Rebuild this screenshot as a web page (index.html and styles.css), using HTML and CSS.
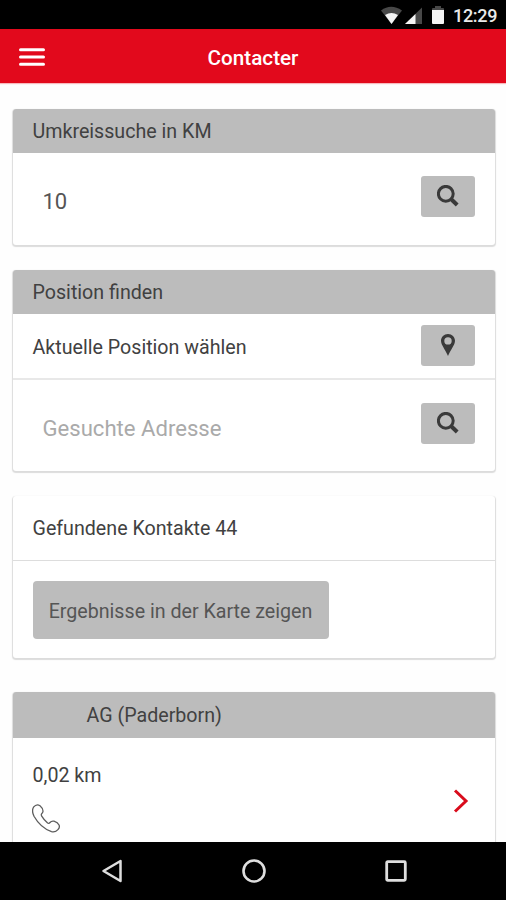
FILE: index.html
```html
<!DOCTYPE html>
<html lang="de">
<head>
<meta charset="utf-8">
<title>Contacter</title>
<link rel="stylesheet" href="styles.css">
</head>
<body>
<div class="status">
  <svg width="42" height="20" viewBox="0 0 42 20">
    <path d="M0 4.500Q10 -3 21 4.500L10.500 18Z" fill="#484848"/>
    <path d="M4 9Q10.500 5 17 9L10.500 18Z" fill="#f4f4f4"/>
    <path d="M41 1.500V18H24Z" fill="#484848"/>
    <path d="M34.500 8V18H24Z" fill="#f4f4f4"/>
  </svg>
  <svg class="battery" width="12" height="20" viewBox="0 0 12 20">
    <path d="M0 4V3Q0 2 1 2H3V0H9V2H11Q12 2 12 3V4Z" fill="#484848"/>
    <path d="M0 4H12V17Q12 18 11 18H1Q0 18 0 17Z" fill="#f4f4f4"/>
  </svg>
  <span class="clock">12:29</span>
</div>
<header class="bar">
  <svg class="menu" width="26" height="18" viewBox="0 0 26 18"><path d="M1.500 1.800H24.500M1.500 9H24.500M1.500 16.200H24.500" stroke="#fff" stroke-width="3" stroke-linecap="round"/></svg>
  <h1>Contacter</h1>
</header>
<main class="content">
  <section class="card radius">
    <h2 class="head">Umkreissuche in KM</h2>
    <div class="row field"><span class="value">10</span>
      <button class="btn"><svg width="22" height="22" viewBox="0 0 22 22" fill="none" stroke="#3a3a3a"><circle cx="8.800" cy="8.800" r="7.400" stroke-width="3"/><path d="M14 14L20.200 20" stroke-width="4"/></svg></button>
    </div>
  </section>
  <section class="card position">
    <h2 class="head">Position finden</h2>
    <div class="row current"><span>Aktuelle Position wählen</span>
      <button class="btn"><svg width="14" height="22" viewBox="0 0 14 22"><path fill="#3a3a3a" fill-rule="evenodd" d="M7 0C3 0 0 3 0 6.800C0 11 4 15 7 22C10 15 14 11 14 6.800C14 3 11 0 7 0ZM7 3.200A3.700 3.700 0 1 1 7 10.600A3.700 3.700 0 1 1 7 3.200Z"/></svg></button>
    </div>
    <div class="row field"><span class="placeholder">Gesuchte Adresse</span>
      <button class="btn"><svg width="22" height="22" viewBox="0 0 22 22" fill="none" stroke="#3a3a3a"><circle cx="8.800" cy="8.800" r="7.400" stroke-width="3"/><path d="M14 14L20.200 20" stroke-width="4"/></svg></button>
    </div>
  </section>
  <section class="card results">
    <div class="row found">Gefundene Kontakte 44</div>
    <div class="row"><button class="map">Ergebnisse in der Karte zeigen</button></div>
  </section>
  <section class="card contact">
    <h2 class="head name">AG (Paderborn)</h2>
    <div class="row entry">
      <div class="details">
        <span>0,02 km</span>
        <svg width="28" height="29" viewBox="0 0 28 29" fill="none" stroke="#5d5d5d" stroke-width="1.300" stroke-linejoin="round"><path d="M1.500 3.200Q4.500 -.5 8 1.700Q10.800 4 11 7Q11.200 8.500 9.500 10Q9 11 9.700 12.200Q12 16 15.600 19Q17 19.800 18 18.500Q19.500 16.700 22 17.200Q25.800 18.200 27.200 21.300Q27.800 23.500 26.200 25.300Q23.500 28.500 19.500 27.600Q8.500 23.700 2 12.200Q-.6 7 1.500 3.200Z"/></svg>
      </div>
      <svg class="chevron" width="16" height="26" viewBox="0 0 16 26"><path d="M2 2.500L13 13L2 23.500" fill="none" stroke="#d90c1c" stroke-width="3"/></svg>
    </div>
  </section>
</main>
<nav class="nav">
  <svg width="22" height="24" viewBox="0 0 22 24"><path d="M19.500 2V22L2.500 12Z" fill="none" stroke="#dedede" stroke-width="2.500" stroke-linejoin="round"/></svg>
  <svg width="24" height="24" viewBox="0 0 24 24"><circle cx="12" cy="12" r="10.500" fill="none" stroke="#dedede" stroke-width="2.600"/></svg>
  <svg width="22" height="22" viewBox="0 0 22 22"><rect x="1.700" y="1.700" width="18.600" height="18.600" rx="1" fill="none" stroke="#dedede" stroke-width="2.800"/></svg>
</nav>
</body>
</html>
```
FILE: styles.css
```css
* { box-sizing: border-box; }
body {
  margin: 0;
  height: 900px;
  display: flex;
  flex-direction: column;
  overflow: hidden;
  background: #fefefe;
  color: #414141;
  font: 19.65px/24px Roboto, sans-serif;
}
svg { display: block; flex: none; }
h1, h2 { margin: 0; font-size: inherit; font-weight: 400; white-space: nowrap; }
button { border: 0; margin: 0; font: inherit; white-space: nowrap; }
span { white-space: nowrap; }
.status {
  flex: none;
  height: 29px;
  padding: 6px 9px 0 0;
  background: #000;
  display: flex;
  justify-content: flex-end;
}
.battery { margin: 0 9px; }
.clock { color: #e9e9e9; font-size: 18px; font-weight: 500; line-height: 20px; width: 44px; letter-spacing: -.3px; }
.bar {
  flex: none;
  height: 54px;
  padding: 2px 19px 0;
  display: grid;
  grid-template-columns: 26px 1fr 26px;
  align-items: center;
  background: #e2091c;
  box-shadow: 0 1px 1px #f8b9bd;
}
.bar h1 { text-align: center; color: #fff; font-size: 20.7px; font-weight: 500; padding-top: 1px; }
.content { flex: 1; min-height: 0; overflow: hidden; padding: 26px 11.5px 0 12.5px; }
.card {
  background: #fff;
  border-radius: 3px;
  overflow: hidden;
  box-shadow: 0 1px 1px 1px #dcdcdc;
  margin-bottom: 25px;
}
.head { height: 44px; padding: 2px 20px 0; display: flex; align-items: center; background: #bcbcbc; }
.row { display: flex; justify-content: space-between; padding: 0 20px; }
.btn {
  width: 54px;
  height: 41px;
  padding: 0 0 1px;
  border-radius: 3px;
  background: #bcbcbc;
  display: flex;
  align-items: center;
  justify-content: center;
}
.radius { height: 136px; }
.position { height: 201px; }
.field { padding: 23px 20px 0 30px; height: 92px; }
.value { font-size: 22px; padding-top: 14px; color: #555; }
.current { height: 66px; padding-top: 11px; border-bottom: 2px solid #e8e8e8; }
.current span { padding-top: 11px; }
.placeholder { font-size: 22.1px; padding-top: 13px; color: #aaa; }
.results { height: 162px; margin-bottom: 34px; }
.found { height: 65px; padding-top: 2px; align-items: center; border-bottom: 1px solid #ddd; margin-bottom: 20px; }
.map { height: 58px; width: 296px; border-radius: 4px; background: #bcbcbc; color: #555; padding: 4px 0 0; }
.contact { height: 220px; }
.contact .head { height: 46px; }
.contact .name { padding-left: 74px; }
.entry { padding-top: 26px; padding-right: 26px; }
.details { display: flex; flex-direction: column; gap: 16px; }
.details svg { margin-left: -.5px; }
.chevron { margin-top: 24px; }
.nav {
  flex: none;
  height: 58px;
  padding: 0 99px 0 101px;
  display: flex;
  align-items: center;
  justify-content: space-between;
  background: #000;
}
```
